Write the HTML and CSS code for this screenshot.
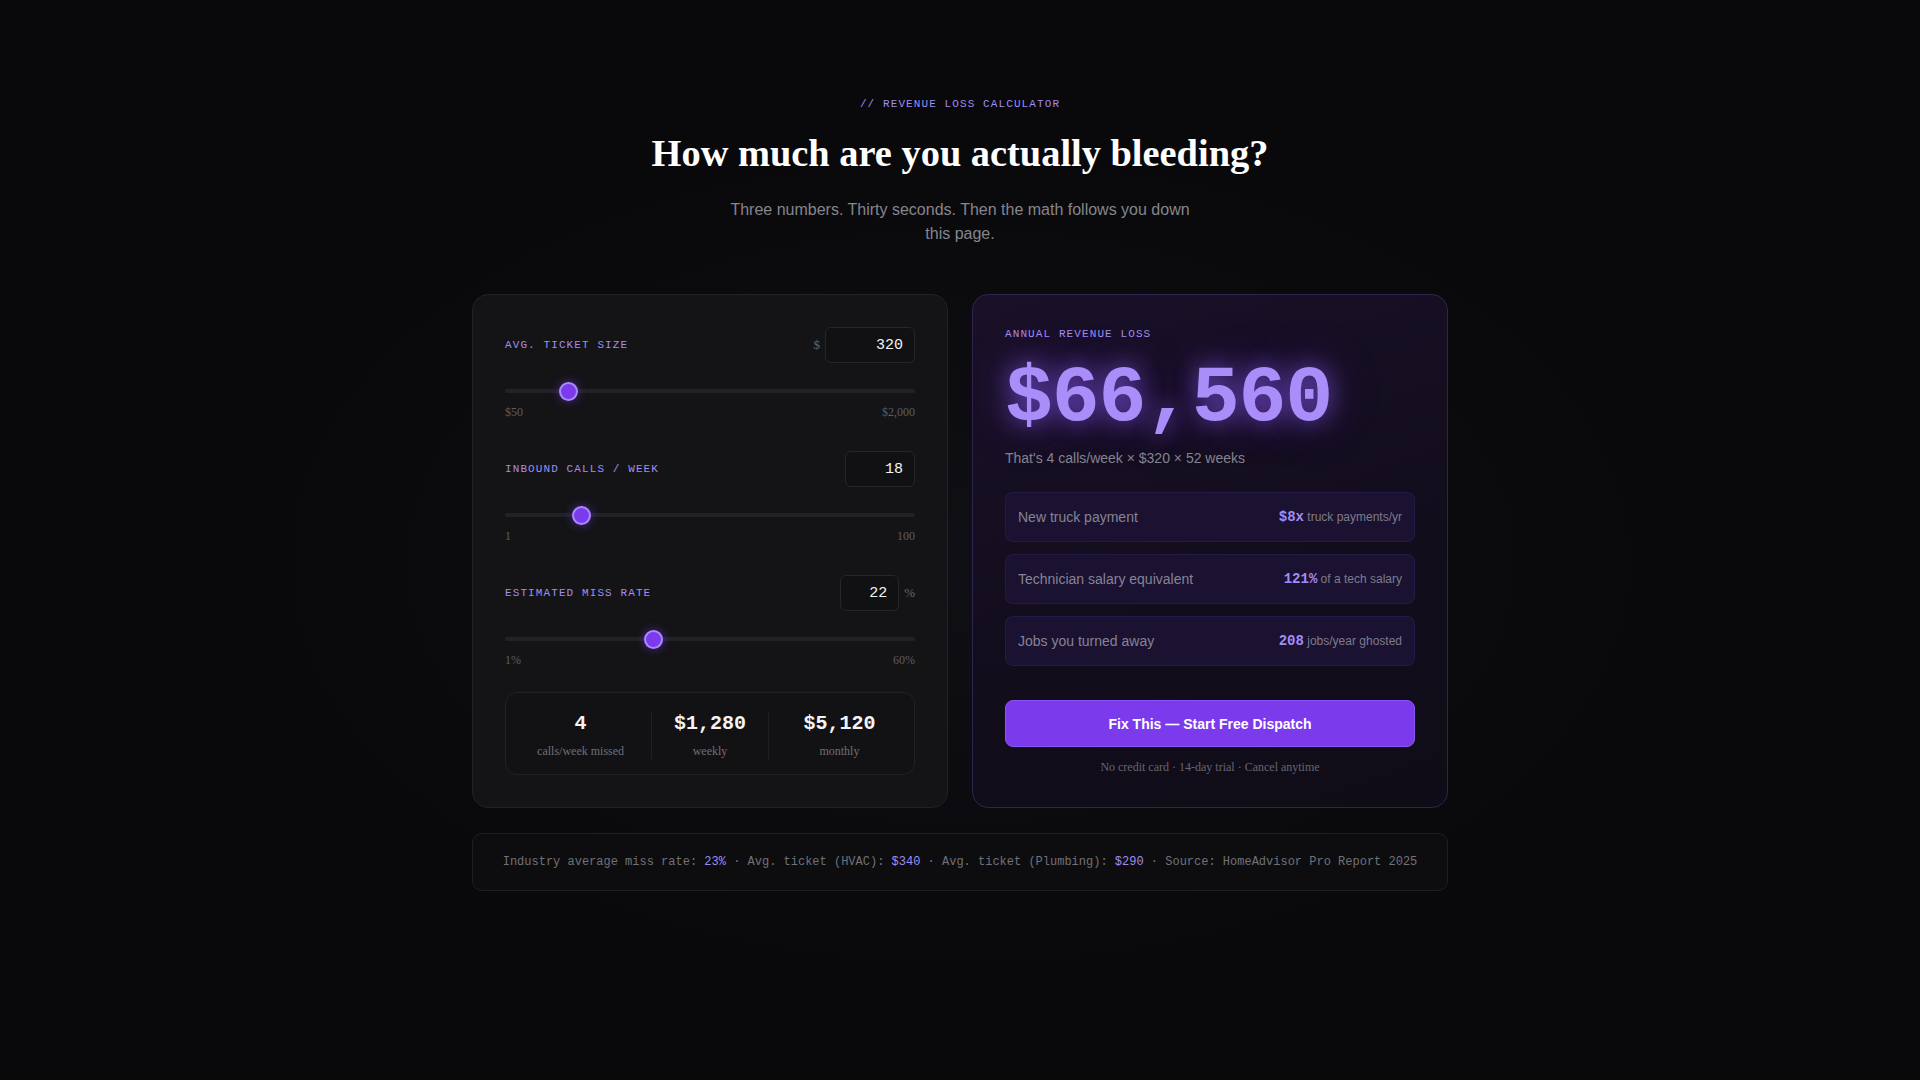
FILE: index.html
```html
<!DOCTYPE html>
<html lang="en">
<head>
<meta charset="utf-8">
<title>Revenue Loss Calculator</title>
<link rel="stylesheet" href="styles.css">
</head>
<body>
<main class="page">
  <header class="intro">
    <div class="eyebrow">// REVENUE LOSS CALCULATOR</div>
    <h1 class="title">How much are you actually bleeding?</h1>
    <p class="subtitle">Three numbers. Thirty seconds. Then the math follows you down this page.</p>
  </header>

  <section class="grid">
    <div class="card inputs-card">
      <div class="field">
        <div class="field-row">
          <label class="field-label">AVG. TICKET SIZE</label>
          <div class="input-group">
            <span class="affix">$</span>
            <input class="num-input w-ticket" type="text" value="320">
          </div>
        </div>
        <input class="range" type="range" min="50" max="2000" value="320">
        <div class="range-labels"><span>$50</span><span>$2,000</span></div>
      </div>

      <div class="field">
        <div class="field-row">
          <label class="field-label">INBOUND CALLS / WEEK</label>
          <div class="input-group">
            <input class="num-input w-calls" type="text" value="18">
          </div>
        </div>
        <input class="range" type="range" min="1" max="100" value="18">
        <div class="range-labels"><span>1</span><span>100</span></div>
      </div>

      <div class="field">
        <div class="field-row">
          <label class="field-label">ESTIMATED MISS RATE</label>
          <div class="input-group">
            <input class="num-input w-rate" type="text" value="22">
            <span class="affix">%</span>
          </div>
        </div>
        <input class="range" type="range" min="1" max="60" value="22">
        <div class="range-labels"><span>1%</span><span>60%</span></div>
      </div>

      <div class="summary">
        <div class="summary-item">
          <div class="summary-num">4</div>
          <div class="summary-label">calls/week missed</div>
        </div>
        <div class="summary-item mid">
          <div class="summary-num">$1,280</div>
          <div class="summary-label">weekly</div>
        </div>
        <div class="summary-item">
          <div class="summary-num">$5,120</div>
          <div class="summary-label">monthly</div>
        </div>
      </div>
    </div>

    <div class="card result-card">
      <div class="field-label">ANNUAL REVENUE LOSS</div>
      <div class="big-number">$66,560</div>
      <div class="formula">That's 4 calls/week × $320 × 52 weeks</div>

      <div class="rows">
        <div class="row">
          <span class="row-name">New truck payment</span>
          <span class="row-value"><b>$8x</b> truck payments/yr</span>
        </div>
        <div class="row">
          <span class="row-name">Technician salary equivalent</span>
          <span class="row-value"><b>121%</b> of a tech salary</span>
        </div>
        <div class="row">
          <span class="row-name">Jobs you turned away</span>
          <span class="row-value"><b>208</b> jobs/year ghosted</span>
        </div>
      </div>

      <button class="cta">Fix This — Start Free Dispatch</button>
      <div class="fineprint">No credit card · 14-day trial · Cancel anytime</div>
    </div>
  </section>

  <footer class="facts">
    Industry average miss rate: <em>23%</em> · Avg. ticket (HVAC): <em>$340</em> · Avg. ticket (Plumbing): <em>$290</em> · Source: HomeAdvisor Pro Report 2025
  </footer>
</main>
</body>
</html>
```

FILE: styles.css
```css
* { box-sizing: border-box; }

html, body {
  margin: 0;
  padding: 0;
}

body {
  min-height: 1080px;
  background-color: #09090b;
  background-image: radial-gradient(ellipse 700px 420px at 50% 52%, rgba(40, 36, 56, 0.22), rgba(9, 9, 11, 0) 100%);
  color: #e8e8ee;
  font-family: "Liberation Serif", serif;
}

.page {
  width: 976px;
  margin: 0 auto;
  padding-top: 96px;
}

.intro {
  text-align: center;
}

.eyebrow {
  font-family: "Liberation Mono", monospace;
  font-size: 11px;
  line-height: 16px;
  letter-spacing: 0.1em;
  color: #9f8cf0;
}

.title {
  margin: 18px 0 0;
  font-family: "Liberation Serif", serif;
  font-weight: 700;
  font-size: 38.4px;
  line-height: 46px;
  color: #ffffff;
}

.subtitle {
  margin: 22px auto 0;
  max-width: 480px;
  font-family: "Liberation Sans", sans-serif;
  font-size: 16px;
  line-height: 24px;
  color: #85858d;
}

.grid {
  margin-top: 48px;
  display: grid;
  grid-template-columns: 1fr 1fr;
  gap: 24px;
}

.card {
  border-radius: 16px;
  padding: 32px;
}

.inputs-card {
  background: #141417;
  border: 1px solid #222226;
}

.field {
  margin-bottom: 31px;
}

.field:nth-child(3) {
  margin-bottom: 24px;
}

.field-row {
  display: flex;
  align-items: center;
  justify-content: space-between;
  height: 36px;
}

.field-label {
  font-family: "Liberation Mono", monospace;
  font-size: 11px;
  line-height: 14px;
  letter-spacing: 0.1em;
  color: #a28df2;
}

.input-group {
  display: flex;
  align-items: center;
  gap: 5px;
}

.affix {
  font-family: "Liberation Serif", serif;
  font-size: 13px;
  color: #66666c;
}

.num-input {
  height: 36px;
  background: #111113;
  border: 1px solid #25252a;
  border-radius: 6px;
  color: #f4f4f6;
  font-family: "Liberation Mono", monospace;
  font-size: 15px;
  text-align: right;
  padding: 0 11px;
  outline: none;
}

.w-ticket { width: 90px; }
.w-calls { width: 70px; }
.w-rate { width: 59px; }

.range {
  -webkit-appearance: none;
  appearance: none;
  display: block;
  width: 100%;
  height: 20px;
  margin: 18px 0 0;
  background: transparent;
}

.range::-webkit-slider-runnable-track {
  height: 4px;
  background: #222126;
  border-radius: 2px;
}

.range::-webkit-slider-thumb {
  -webkit-appearance: none;
  appearance: none;
  width: 19px;
  height: 19px;
  margin-top: -7.5px;
  border-radius: 50%;
  background: #7c3aed;
  border: 2px solid #a78bfa;
  box-shadow: 0 0 10px rgba(124, 58, 237, 0.55);
}

.range-labels {
  display: flex;
  justify-content: space-between;
  margin-top: 3px;
  font-family: "Liberation Serif", serif;
  font-size: 12px;
  line-height: 16px;
  color: #5c5c63;
}

.summary {
  display: grid;
  grid-template-columns: 1.2fr 1fr 1.2fr;
  padding: 19px 4px 15px;
  border: 1px solid #222226;
  border-radius: 12px;
  background: #121215;
}

.summary-item {
  text-align: center;
}

.summary-item.mid {
  border-left: 1px solid #202024;
  border-right: 1px solid #202024;
}

.summary-num {
  font-family: "Liberation Mono", monospace;
  font-weight: 700;
  font-size: 20px;
  line-height: 24px;
  color: #f4f4f6;
}

.summary-label {
  margin-top: 7px;
  font-family: "Liberation Serif", serif;
  font-size: 12px;
  line-height: 16px;
  color: #6f6f76;
}

.result-card {
  background: linear-gradient(160deg, #1a1129 0%, #120d1c 55%, #100c17 100%);
  border: 1px solid #2f2350;
}

.big-number {
  margin-top: 18px;
  font-family: "Liberation Mono", monospace;
  font-weight: 700;
  font-size: 80px;
  line-height: 80px;
  letter-spacing: -1.3px;
  color: #a98df8;
  text-shadow: 0 0 22px rgba(139, 92, 246, 0.7), 0 0 50px rgba(124, 58, 237, 0.4);
}

.formula {
  margin-top: 9px;
  font-family: "Liberation Sans", sans-serif;
  font-size: 14px;
  line-height: 20px;
  color: #85828f;
}

.rows {
  margin-top: 24px;
  display: flex;
  flex-direction: column;
  gap: 12px;
}

.row {
  height: 50px;
  display: flex;
  align-items: center;
  justify-content: space-between;
  padding: 0 12px;
  background: #1a1230;
  border: 1px solid rgba(124, 92, 220, 0.12);
  border-radius: 8px;
}

.row-name {
  font-family: "Liberation Sans", sans-serif;
  font-size: 14px;
  color: #878296;
}

.row-value {
  font-family: "Liberation Sans", sans-serif;
  font-size: 12px;
  color: #7f7b8c;
}

.row-value b {
  font-family: "Liberation Mono", monospace;
  font-weight: 700;
  font-size: 14px;
  color: #a48cf5;
}

.cta {
  display: block;
  width: 100%;
  height: 47px;
  margin-top: 34px;
  background: #7c3aed;
  border: 1px solid #8b55f5;
  border-radius: 8px;
  color: #ffffff;
  font-family: "Liberation Sans", sans-serif;
  font-weight: 700;
  font-size: 14px;
  cursor: pointer;
}

.fineprint {
  margin-top: 12px;
  text-align: center;
  font-family: "Liberation Serif", serif;
  font-size: 12px;
  line-height: 16px;
  color: #67656f;
}

.facts {
  margin-top: 25px;
  padding: 20px 16px;
  border: 1px solid #1f1f23;
  border-radius: 10px;
  background: #0d0d10;
  text-align: center;
  font-family: "Liberation Mono", monospace;
  font-size: 12px;
  line-height: 16px;
  color: #717178;
}

.facts em {
  font-style: normal;
  color: #a08cf0;
}
```
